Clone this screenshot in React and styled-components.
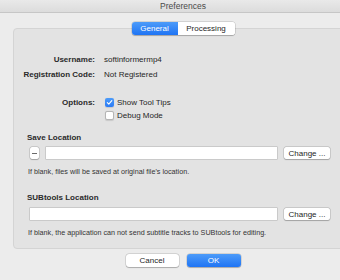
import React from "react";
import styled, { createGlobalStyle } from "styled-components";

const GlobalStyle = createGlobalStyle`
  html, body {
    margin: 0;
    padding: 0;
    background: #ececec;
    overflow: hidden;
  }
  body {
    font-family: "Liberation Sans", Arial, sans-serif;
    color: #262626;
  }
`;

const Window = styled.div`
  width: 366px;
  height: 280px;
  display: flex;
  flex-direction: column;
  background: #ececec;
`;

const TitleBar = styled.div`
  height: 12px;
  border-bottom: 1px solid #c6c6c6;
  background: linear-gradient(#e9e9e9, #dcdcdc);
  display: flex;
  align-items: center;
  justify-content: center;
  font-size: 8.5px;
  color: #4a4a4a;
`;

const Content = styled.div`
  padding: 0 13px;
  display: flex;
  flex-direction: column;
`;

const Tabs = styled.div`
  position: relative;
  z-index: 1;
  margin: 9px auto 0;
  display: flex;
  height: 13px;
  border-radius: 3px;
  background: #fff;
  box-shadow: 0 0 0 0.5px rgba(0, 0, 0, 0.18), 0 0.5px 1px rgba(0, 0, 0, 0.2);
  overflow: hidden;
`;

const Tab = styled.div`
  width: ${(p) => p.$w}px;
  display: flex;
  align-items: center;
  justify-content: center;
  font-size: 8px;
  color: ${(p) => (p.$active ? "#fff" : "#262626")};
  background: ${(p) => (p.$active ? "linear-gradient(#4c9bf9, #1f74f4)" : "#fff")};
`;

const Box = styled.div`
  margin-top: -7px;
  border: 1px solid #d4d4d4;
  border-radius: 4px;
  background: #e3e3e3;
  padding: 0 22px 10px 13px;
  display: flex;
  flex-direction: column;
`;

const InfoGrid = styled.div`
  margin: 25px 0 0 -4px;
  display: grid;
  grid-template-columns: 72px 1fr;
  column-gap: 9px;
  row-gap: 4px;
  font-size: 8px;
  line-height: 11px;
`;

const Label = styled.div`
  text-align: right;
  font-weight: bold;
  white-space: nowrap;
  color: #2a2a2a;
  ${(p) => p.$spaced && "margin-top: 13px;"}
`;

const Value = styled.div`
  white-space: nowrap;
`;

const Checks = styled.div`
  display: flex;
  flex-direction: column;
  margin-top: 12px;
`;

const CheckRow = styled.div`
  height: 13px;
  display: flex;
  align-items: center;
  gap: 3px;
  padding-left: 1px;
`;

const CheckText = styled.span`
  font-size: 8px;
`;

const CheckBox = styled.span`
  width: 9px;
  height: 9px;
  box-sizing: border-box;
  border-radius: 2px;
  display: flex;
  align-items: center;
  justify-content: center;
  background: ${(p) => (p.$on ? "linear-gradient(#4c9bf9, #2b7bf5)" : "#fff")};
  border: ${(p) => (p.$on ? "none" : "0.5px solid #b5b5b5")};
  box-shadow: 0 0.5px 1px rgba(0, 0, 0, 0.12);
`;

const SectionTitle = styled.div`
  margin-top: ${(p) => p.$top}px;
  font-size: 8px;
  line-height: 11px;
  font-weight: bold;
  color: #2a2a2a;
`;

const FieldRow = styled.div`
  margin: ${(p) => p.$top}px 0 0 3px;
  height: 12px;
  display: flex;
  align-items: stretch;
`;

const MinusButton = styled.div`
  width: 9px;
  margin-right: 7px;
  box-sizing: border-box;
  border-radius: 2px;
  background: #fff;
  box-shadow: 0 0 0 0.5px rgba(0, 0, 0, 0.2), 0 0.5px 1px rgba(0, 0, 0, 0.2);
  display: flex;
  align-items: center;
  justify-content: center;
  &::after {
    content: "";
    width: 5px;
    height: 1px;
    background: #6a6a6a;
  }
`;

const TextField = styled.div`
  flex: 1;
  background: #fff;
  box-shadow: 0 0 0 0.5px rgba(0, 0, 0, 0.22);
  margin-right: 7px;
`;

const ChangeButton = styled.div`
  width: 46px;
  border-radius: 2px;
  background: #fff;
  box-shadow: 0 0 0 0.5px rgba(0, 0, 0, 0.2), 0 0.5px 1px rgba(0, 0, 0, 0.2);
  font-size: 8px;
  display: flex;
  align-items: center;
  justify-content: center;
  color: #262626;
`;

const Hint = styled.div`
  margin: 7px 0 0 1px;
  font-size: 7.2px;
  line-height: 11px;
  color: #333;
  white-space: nowrap;
`;

const Footer = styled.div`
  margin-top: 5px;
  display: flex;
  justify-content: center;
  gap: 8px;
`;

const DialogButton = styled.div`
  width: ${(p) => p.$w}px;
  height: 13px;
  border-radius: 3px;
  display: flex;
  align-items: center;
  justify-content: center;
  font-size: 8px;
  color: ${(p) => (p.$primary ? "#fff" : "#262626")};
  background: ${(p) => (p.$primary ? "linear-gradient(#4c9bf9, #1f74f4)" : "#fff")};
  box-shadow: 0 0 0 0.5px rgba(0, 0, 0, 0.18), 0 0.5px 1px rgba(0, 0, 0, 0.2);
`;

function Check({ on, children }) {
  return (
    <CheckRow>
      <CheckBox $on={on}>
        {on && (
          <svg width="7" height="7" viewBox="0 0 7 7">
            <path d="M1.3 3.7 L2.8 5.2 L5.8 1.6" fill="none" stroke="#fff" strokeWidth="1.1" strokeLinecap="round" strokeLinejoin="round" />
          </svg>
        )}
      </CheckBox>
      <CheckText>{children}</CheckText>
    </CheckRow>
  );
}

export default function App() {
  return (
    <>
      <GlobalStyle />
      <Window>
        <TitleBar>Preferences</TitleBar>
        <Content>
          <Tabs>
            <Tab $active $w={46}>General</Tab>
            <Tab $w={57}>Processing</Tab>
          </Tabs>
          <Box>
            <InfoGrid>
              <Label>Username:</Label>
              <Value>softinformermp4</Value>
              <Label>Registration Code:</Label>
              <Value>Not Registered</Value>
              <Label $spaced>Options:</Label>
              <Checks>
                <Check on>Show Tool Tips</Check>
                <Check>Debug Mode</Check>
              </Checks>
            </InfoGrid>

            <SectionTitle $top={10}>Save Location</SectionTitle>
            <FieldRow $top={4}>
              <MinusButton />
              <TextField />
              <ChangeButton>Change ...</ChangeButton>
            </FieldRow>
            <Hint>If blank, files will be saved at original file's location.</Hint>

            <SectionTitle $top={15}>SUBtools Location</SectionTitle>
            <FieldRow $top={5}>
              <TextField />
              <ChangeButton>Change ...</ChangeButton>
            </FieldRow>
            <Hint>If blank, the application can not send subtitle tracks to SUBtools for editing.</Hint>
          </Box>
          <Footer>
            <DialogButton $w={53}>Cancel</DialogButton>
            <DialogButton $primary $w={54}>OK</DialogButton>
          </Footer>
        </Content>
      </Window>
    </>
  );
}
